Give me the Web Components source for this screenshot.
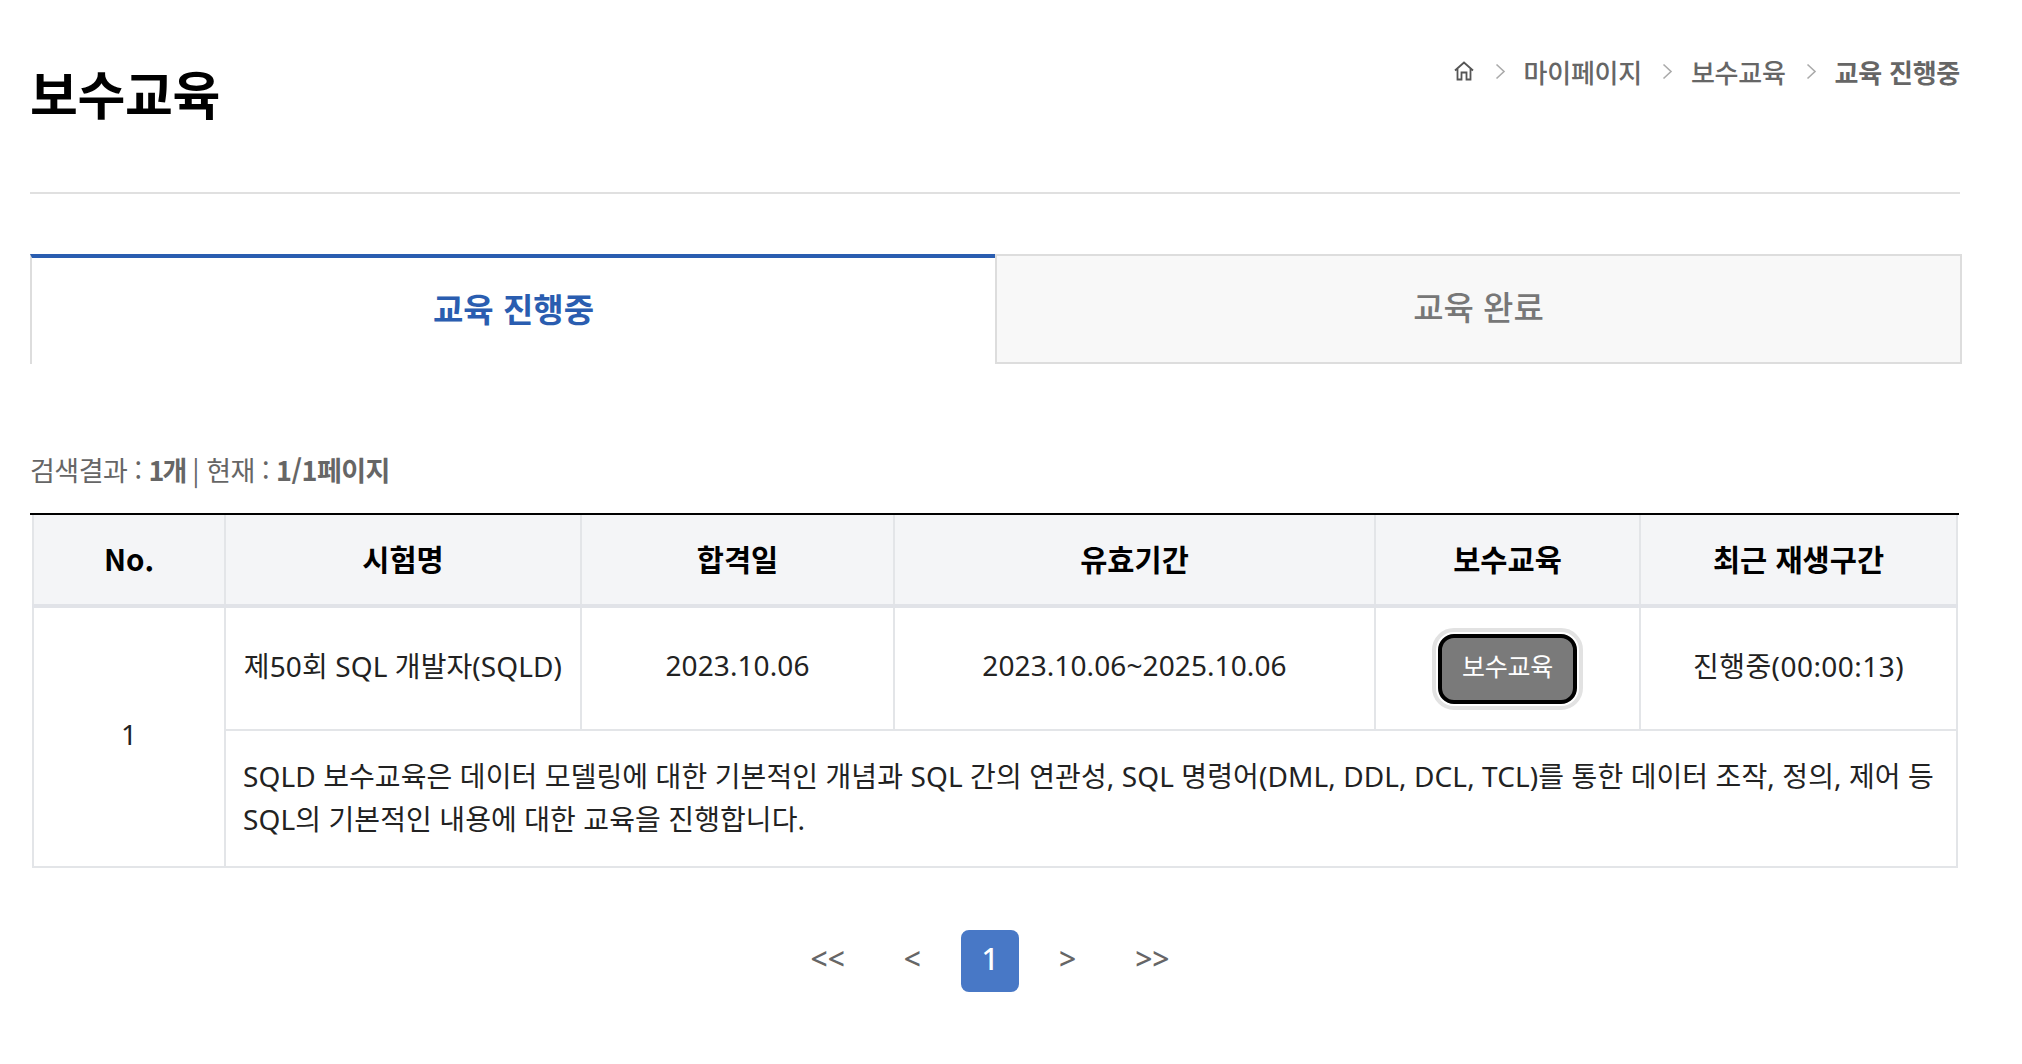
<!DOCTYPE html>
<html lang="ko">
<head>
<meta charset="utf-8">
<title>보수교육</title>
<style>
  html, body { margin: 0; background: #fff; }
  body { font-family: "Noto Sans CJK KR", "Noto Sans", sans-serif; color: #222; }
</style>
</head>
<body>
<edu-page>
  <page-head slot="head" heading="보수교육">
    <bread-crumb items="마이페이지,보수교육" current="교육 진행중"></bread-crumb>
  </page-head>
  <tab-bar slot="tabs" active="교육 진행중" other="교육 완료"></tab-bar>
  <result-summary slot="summary" count="1개" page="1/1페이지"></result-summary>
  <exam-table slot="table"></exam-table>
  <page-nav slot="nav" current="1"></page-nav>
</edu-page>

<script>
const FONT = '"Noto Sans CJK KR", "Noto Sans", sans-serif';
const BODY_FONT = '"Noto Sans", "Noto Sans CJK KR", sans-serif';

class EduPage extends HTMLElement {
    constructor() {
        super();
        this.attachShadow({mode: "open"});
        this.shadowRoot.innerHTML = `
        <style>
          :host{ display:flex; flex-direction:column; padding:0 62px 0 30px; width:1930px; font-family:${FONT}; }
        </style>
        <slot name="head"></slot>
        <slot name="tabs"></slot>
        <slot name="summary"></slot>
        <slot name="table"></slot>
        <slot name="nav"></slot>`;
    }
}

class PageHead extends HTMLElement {
    constructor() {
        super();
        this.attachShadow({mode: "open"});
        this.shadowRoot.innerHTML = `
        <style>
          :host{ display:flex; justify-content:space-between; align-items:flex-start; height:192px; border-bottom:2px solid #e0e0e0; margin-bottom:60px; box-sizing:content-box; }
          h1{ margin:57px 0 0; font-size:52px; line-height:72px; font-weight:700; color:#000; letter-spacing:-.3px; }
          .right{ margin-top:52px; }
        </style>
        <h1>${this.getAttribute("heading")}</h1>
        <div class="right"><slot></slot></div>`;
    }
}

class BreadCrumb extends HTMLElement {
    constructor() {
        super();
        this.attachShadow({mode: "open"});
        const chevron = `<svg class="sep" width="11" height="17" viewBox="0 0 11 17"><path d="M1.5 1.5 L9 8.5 L1.5 15.5" fill="none" stroke="#aaa" stroke-width="1.6"/></svg>`;
        const items = this.getAttribute("items").split(",").map(t => `${chevron}<span>${t}</span>`).join("");
        this.shadowRoot.innerHTML = `
        <style>
          :host{ display:flex; align-items:center; height:38px; font-size:26px; font-weight:500; color:#666; letter-spacing:-.25px; }
          svg{ display:block; }
          .sep{ margin:0 18px 0 20px; }
          b{ font-weight:700; }
        </style>
        <svg width="22" height="22" viewBox="0 0 22 22" fill="none" stroke="#555" stroke-width="1.8"><path d="M2 10.5 L11 2.5 L20 10.5 M4.5 9 V19.5 H8.5 V12.5 H13.5 V19.5 H17.5 V9"/></svg>
        ${items}${chevron}<b>${this.getAttribute("current")}</b>`;
    }
}

class TabBar extends HTMLElement {
    constructor() {
        super();
        this.attachShadow({mode: "open"});
        this.shadowRoot.innerHTML = `
        <style>
          :host{ display:grid; grid-template-columns:965px 967px; height:110px; font-size:33px; width:1932px; }
          div{ display:flex; align-items:center; justify-content:center; box-sizing:border-box; padding-bottom:6px; }
          .on{ border-top:4px solid #2a5db0; border-left:2px solid #ddd; color:#2a5db0; font-weight:700; }
          .off{ border:2px solid #ddd; background:#f8f8f8; color:#777; font-weight:500; }
        </style>
        <div class="on">${this.getAttribute("active")}</div>
        <div class="off">${this.getAttribute("other")}</div>`;
    }
}

class ResultSummary extends HTMLElement {
    constructor() {
        super();
        this.attachShadow({mode: "open"});
        this.shadowRoot.innerHTML = `
        <style>
          :host{ display:block; margin-top:87px; height:38px; line-height:38px; margin-bottom:24px; font-size:27px; color:#666; letter-spacing:-.5px; }
          b{ font-weight:700; }
          b.count{ letter-spacing:-2px; }
        </style>
        검색결과 : <b class="count">${this.getAttribute("count")}</b> | 현재 : <b>${this.getAttribute("page")}</b>`;
    }
}

class RoundButton extends HTMLElement {
    constructor() {
        super();
        this.attachShadow({mode: "open"});
        this.shadowRoot.innerHTML = `
        <style>
          :host{ display:inline-block; vertical-align:middle; }
          button{ display:block; width:139px; height:70px; box-sizing:border-box; border:4px solid #000; border-radius:16px; background:#7a7a7a; color:#fff; font:400 25px ${FONT}; letter-spacing:-.3px; outline:4px solid #e2e2e2; outline-offset:2px; padding:0 0 8px; }
        </style>
        <button><slot></slot></button>`;
    }
}

class ExamTable extends HTMLElement {
    constructor() {
        super();
        this.attachShadow({mode: "open"});
        this.shadowRoot.innerHTML = `
        <style>
          :host{ display:block; border-top:2px solid #000; width:1929px; }
          table{ border-collapse:collapse; table-layout:fixed; width:1924px; margin-left:2px; font-size:28px; color:#222; font-family:${BODY_FONT}; letter-spacing:.1px; }
          th, td{ border:2px solid #e3e5e8; text-align:center; padding:0 0 5px; }
          tr:first-child th{ border-top:0; }
          th{ height:91px; box-sizing:border-box; padding-bottom:4px; background:#f4f5f7; font-weight:700; color:#000; font-size:29.5px; font-family:${FONT}; border-bottom:4px solid #e1e3e8; letter-spacing:0; }
          .row td{ height:124px; box-sizing:border-box; padding-bottom:7px; }
          .row td.no{ padding-bottom:6px; }
          .row td.btn{ padding:0; }
          td.name{ white-space:nowrap; }
          td.play{ letter-spacing:.45px; }
          td.desc{ height:137px; box-sizing:border-box; text-align:left; padding:0 18px 1px 17px; line-height:43px; }
        </style>
        <table>
          <colgroup>
            <col style="width:192px"><col style="width:356px"><col style="width:313px">
            <col style="width:481px"><col style="width:265px"><col style="width:317px">
          </colgroup>
          <tr><th>No.</th><th>시험명</th><th>합격일</th><th>유효기간</th><th>보수교육</th><th>최근 재생구간</th></tr>
          <tr class="row">
            <td class="no" rowspan="2">1</td>
            <td class="name">제50회 SQL 개발자(SQLD)</td>
            <td>2023.10.06</td>
            <td>2023.10.06~2025.10.06</td>
            <td class="btn"><round-button>보수교육</round-button></td>
            <td class="play">진행중(00:00:13)</td>
          </tr>
          <tr>
            <td class="desc" colspan="5">SQLD 보수교육은 데이터 모델링에 대한 기본적인 개념과 SQL 간의 연관성, SQL 명령어(DML, DDL, DCL, TCL)를 통한 데이터 조작, 정의, 제어 등 SQL의 기본적인 내용에 대한 교육을 진행합니다.</td>
          </tr>
        </table>`;
    }
}

class PageNav extends HTMLElement {
    constructor() {
        super();
        this.attachShadow({mode: "open"});
        this.shadowRoot.innerHTML = `
        <style>
          :host{ display:flex; justify-content:center; align-items:center; gap:21px; margin-top:62px; padding-right:10px; height:62px; font-size:30px; font-weight:500; color:#666; font-family:"Noto Sans", sans-serif; }
          a{ padding:0 19px 4px; line-height:58px; }
          a.on{ box-sizing:border-box; width:58px; height:62px; padding:0; line-height:58px; text-align:center; background:#4878c6; color:#fff; border-radius:8px; }
        </style>
        <a>&lt;&lt;</a><a>&lt;</a><a class="on">${this.getAttribute("current")}</a><a>&gt;</a><a>&gt;&gt;</a>`;
    }
}

// children first, so nested elements upgrade with their attributes in place
customElements.define("bread-crumb", BreadCrumb);
customElements.define("page-head", PageHead);
customElements.define("tab-bar", TabBar);
customElements.define("result-summary", ResultSummary);
customElements.define("round-button", RoundButton);
customElements.define("exam-table", ExamTable);
customElements.define("page-nav", PageNav);
customElements.define("edu-page", EduPage);
</script>
</body>
</html>
